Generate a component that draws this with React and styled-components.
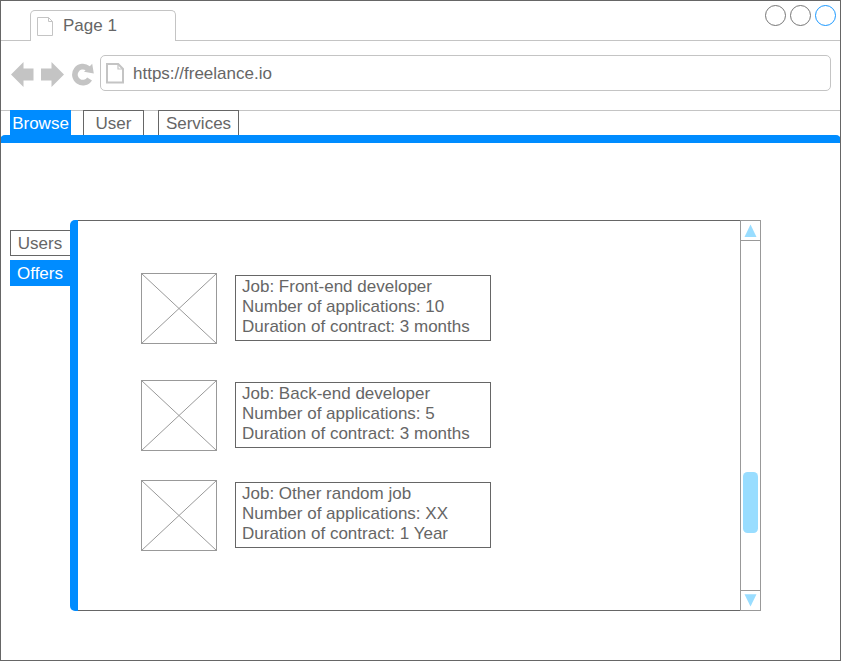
import React from "react";
import styled, { createGlobalStyle } from "styled-components";

const ink = "#666666";
const soft = "#c4c4c4";
const blue = "#008cff";
const sky = "#99ddff";

const GlobalStyle = createGlobalStyle`
  *, *::before, *::after { box-sizing: border-box; }
  body {
    margin: 0;
    background: #fff;
    color: ${ink};
    font: 17px/20px "Liberation Sans", Arial, sans-serif;
  }
  svg { display: block; flex: none; }
`;

const BrowserWindow = styled.div`
  width: 841px;
  height: 661px;
  border: 1px solid ${ink};
  overflow: hidden;
`;

const TabStrip = styled.header`
  display: flex;
  justify-content: space-between;
  height: 40px;
  padding: 4px 4px 0 29px;
  border-bottom: 1px solid ${soft};
`;

const PageTab = styled.div`
  display: flex;
  align-items: center;
  gap: 9px;
  width: 146px;
  height: 31px;
  margin-top: 5px;
  padding-left: 6px;
  border: 1px solid ${soft};
  border-bottom: 0;
  border-radius: 5px 5px 0 0;
  background: #fff;
`;

const WindowButtons = styled.div`
  display: flex;
  gap: 4px;
`;

const Toolbar = styled.div`
  display: flex;
  align-items: center;
  height: 69px;
  padding: 0 9px 5px 10px;
`;

const NavIcons = styled.div`
  display: flex;
  width: 89px;
  height: 26px;
  margin-top: 3px;
`;

const AddressBar = styled.div`
  display: flex;
  flex: 1;
  align-items: center;
  gap: 9px;
  height: 36px;
  padding-left: 5px;
  border: 1px solid ${soft};
  border-radius: 5px;
`;

const Address = styled.span`
  padding-top: 2px;
`;

const MainNav = styled.nav`
  display: flex;
  height: 33px;
  padding-left: 9px;
  background: linear-gradient(${soft}, ${soft}) 0 0 / 100% 1px no-repeat;
`;

const NavTab = styled.a`
  height: 25px;
  width: ${(p) => p.$width}px;
  margin-right: ${(p) => p.$gap}px;
  padding-top: 3px;
  border: 1px solid ${(p) => (p.$active ? blue : ink)};
  border-bottom: 0;
  background: ${(p) => (p.$active ? blue : "#fff")};
  color: ${(p) => (p.$active ? "#fff" : ink)};
  text-align: center;
  white-space: nowrap;
`;

const NavRule = styled.div`
  height: 8px;
  margin: -8px -1px 0;
  border-radius: 5px 5px 0 0;
  background: ${blue};
`;

const Content = styled.main`
  display: flex;
  padding: 77px 0 0 9px;
`;

const SideNav = styled.nav`
  display: flex;
  flex-direction: column;
  gap: 4px;
  width: 60px;
  padding-top: 10px;
`;

const SideTab = styled.a`
  height: 26px;
  padding: 3px 1px 0 0;
  border: 1px solid ${(p) => (p.$active ? blue : ink)};
  border-right: 0;
  background: ${(p) => (p.$active ? blue : "#fff")};
  color: ${(p) => (p.$active ? "#fff" : ink)};
  text-align: center;
`;

const PanelEdge = styled.div`
  width: 8px;
  height: 391px;
  border-radius: 5px 0 0 5px;
  background: ${blue};
`;

const OfferList = styled.section`
  display: flex;
  flex-direction: column;
  width: 662px;
  height: 391px;
  padding: 52px 0 0 63px;
  border: solid ${ink};
  border-width: 1px 0;
`;

const Offer = styled.article`
  display: flex;
  align-items: flex-start;
  gap: 18px;
  margin-bottom: ${(p) => p.$gap}px;
`;

const OfferDetails = styled.div`
  width: 256px;
  height: 66px;
  margin-top: 2px;
  padding: 1px 0 0 6px;
  border: 1px solid ${ink};
  white-space: nowrap;
`;

const Scrollbar = styled.div`
  display: flex;
  flex-direction: column;
  align-items: center;
  justify-content: space-between;
  width: 21px;
  height: 391px;
  border: 1px solid #999;
`;

const ScrollButton = styled.div`
  width: 19px;
  height: 20px;
  border: solid #999;
  border-width: ${(p) => (p.$down ? "1px 0 0" : "0 0 1px")};
`;

const ScrollThumb = styled.div`
  width: 14.6px;
  height: 60.6px;
  margin-top: 174.4px;
  border-radius: 4.5px;
  background: ${sky};
`;

const PageIcon = ({ bold }) =>
  bold ? (
    <svg width="18" height="21" viewBox="0 0 18 21" fill="none" stroke={soft} strokeWidth="2">
      <path d="M1 1H12.2L17 6V19.5H1Z" />
      <path d="M12 1V6H17" strokeWidth="1.2" />
    </svg>
  ) : (
    <svg width="17" height="20" viewBox="0 0 17 20" fill="none" stroke={soft}>
      <path d="M.5 1.5H11.5L15.5 5.5V19.5H.5Z M11.5 1.5V5.5H15.5" />
    </svg>
  );

const Circle = ({ color }) => (
  <svg width="21" height="21" fill="none" stroke={color} strokeWidth=".9">
    <circle cx="10.5" cy="10.5" r="10" />
  </svg>
);

const Placeholder = () => (
  <svg width="76" height="71" fill="none" stroke="#999">
    <rect x=".5" y=".5" width="75" height="70" />
    <path d="M.5 .5L75.5 70.5M75.5 .5L.5 70.5" />
  </svg>
);

const offers = [
  { job: "Front-end developer", applications: "10", duration: "3 months", gap: 36 },
  { job: "Back-end developer", applications: "5", duration: "3 months", gap: 29 },
  { job: "Other random job", applications: "XX", duration: "1 Year", gap: 0 },
];

export default function App() {
  return (
    <>
      <GlobalStyle />
      <BrowserWindow>
        <TabStrip>
          <PageTab>
            <PageIcon />
            Page 1
          </PageTab>
          <WindowButtons>
            <Circle color={ink} />
            <Circle color={ink} />
            <Circle color={blue} />
          </WindowButtons>
        </TabStrip>
        <Toolbar>
          <NavIcons>
            <svg width="85" height="26" fill={soft}>
              <path d="M0 12.5L12.5 0V6.5H22.5V18.5H12.5V25Z" />
              <path d="M53 12.5L40.5 0V6.5H30V18.5H40.5V25Z" />
              <path d="M78.8 4.3L81.2 1.8L82.8 11.6L73 9.8L74.6 8.2A5.2 5.2 0 1 0 76.2 15.6L81 18.4A10.8 10.8 0 1 1 78.8 4.3Z" />
            </svg>
          </NavIcons>
          <AddressBar>
            <PageIcon bold />
            <Address>https://freelance.io</Address>
          </AddressBar>
        </Toolbar>
        <MainNav>
          <NavTab $active $width={61} $gap={12}>Browse</NavTab>
          <NavTab $width={61} $gap={14}>User</NavTab>
          <NavTab $width={81} $gap={0}>Services</NavTab>
        </MainNav>
        <NavRule />
        <Content>
          <SideNav>
            <SideTab>Users</SideTab>
            <SideTab $active>Offers</SideTab>
          </SideNav>
          <PanelEdge />
          <OfferList>
            {offers.map((o) => (
              <Offer key={o.job} $gap={o.gap}>
                <Placeholder />
                <OfferDetails>
                  <div>Job: {o.job}</div>
                  <div>Number of applications: {o.applications}</div>
                  <div>Duration of contract: {o.duration}</div>
                </OfferDetails>
              </Offer>
            ))}
          </OfferList>
          <Scrollbar>
            <ScrollButton>
              <svg width="19" height="19" fill={sky}>
                <path d="M9.5 3.5L15.5 16H3.5Z" />
              </svg>
            </ScrollButton>
            <ScrollThumb />
            <ScrollButton $down>
              <svg width="19" height="19" fill={sky}>
                <path d="M9.5 15.5L15.5 3.2H3.5Z" />
              </svg>
            </ScrollButton>
          </Scrollbar>
        </Content>
      </BrowserWindow>
    </>
  );
}
